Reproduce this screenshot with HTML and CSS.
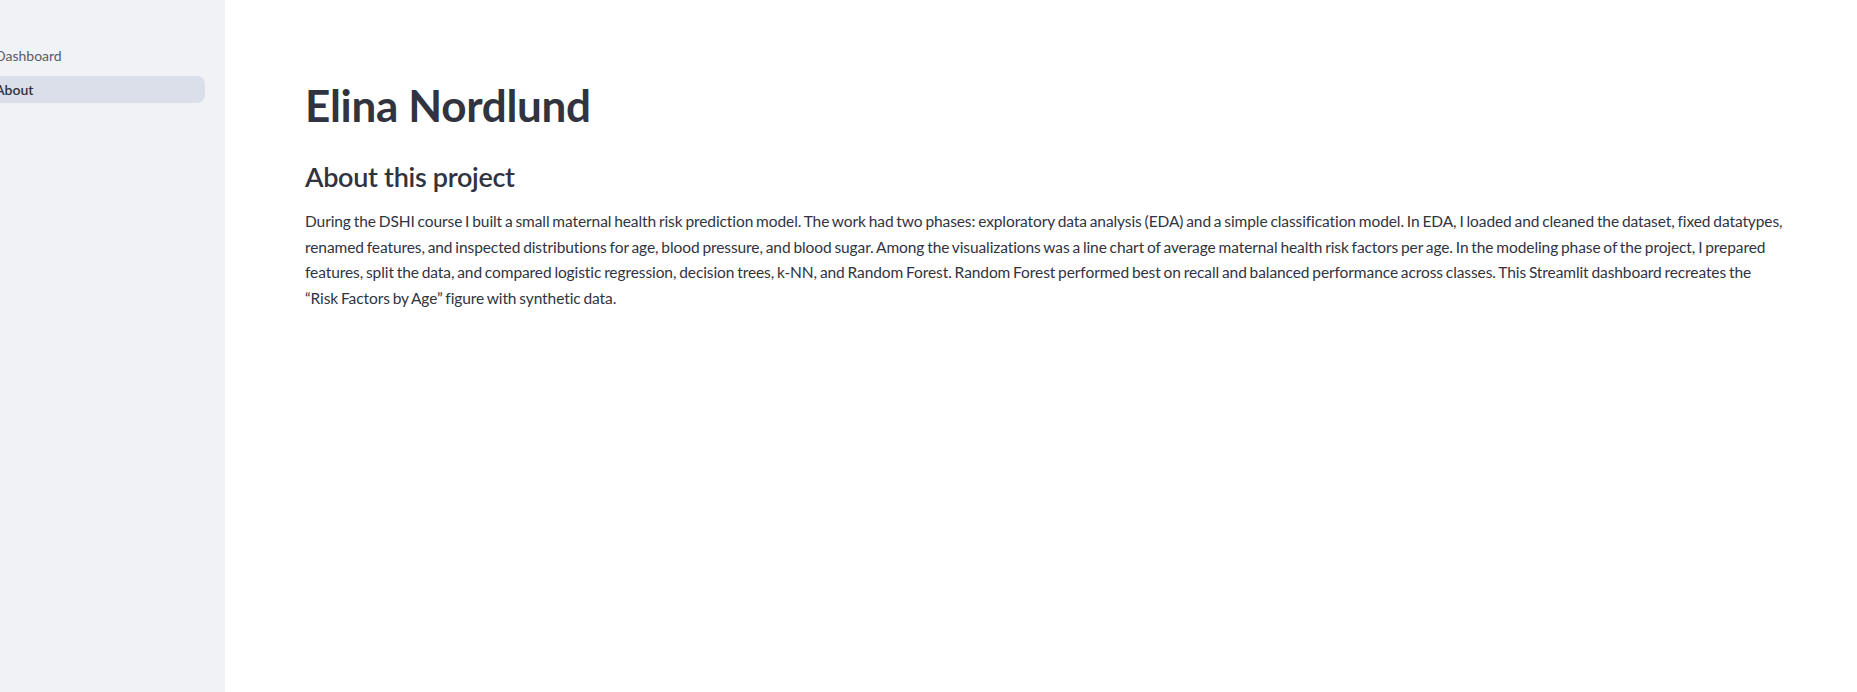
FILE: index.html
```html
<!DOCTYPE html>
<html lang="en">
<head>
<meta charset="utf-8">
<title>About</title>
<link rel="stylesheet" href="styles.css">
</head>
<body>
<div class="app">
  <aside class="sidebar">
    <nav class="nav">
      <a class="nav-item">Dashboard</a>
      <a class="nav-item active">About</a>
    </nav>
  </aside>
  <main class="main">
    <div class="block">
      <h1 class="title">Elina Nordlund</h1>
      <h2 class="subtitle">About this project</h2>
      <p class="body-text">During the DSHI course I built a small maternal health risk prediction model. The work had two phases: exploratory data analysis (EDA) and a simple classification model. In EDA, I loaded and cleaned the dataset, fixed datatypes, renamed features, and inspected distributions for age, blood pressure, and blood sugar. Among the visualizations was a line chart of average maternal health risk factors per age. In the modeling phase of the project, I prepared features, split the data, and compared logistic regression, decision trees, k-NN, and Random Forest. Random Forest performed best on recall and balanced performance across classes. This Streamlit dashboard recreates the “Risk Factors by Age” figure with synthetic data.</p>
    </div>
  </main>
</div>
</body>
</html>
```
FILE: styles.css
```css
html, body {
  margin: 0;
  padding: 0;
  background: #ffffff;
}
body {
  font-family: Lato, "Noto Sans", sans-serif;
  color: #31333f;
}
.app {
  display: flex;
  width: 1857px;
  height: 692px;
  overflow: hidden;
}
.sidebar {
  flex: 0 0 225px;
  background: #f0f2f6;
  overflow: hidden;
}
.nav {
  display: flex;
  flex-direction: column;
  gap: 7px;
  padding-top: 42px;
  margin-left: -24px;
  width: 229px;
}
.nav-item {
  display: block;
  height: 27px;
  line-height: 27px;
  padding-left: 19px;
  border-radius: 8px;
  font-size: 14px;
  color: #585c6a;
}
.nav-item.active {
  background: #dadfe9;
  color: #31333f;
  font-weight: 600;
}
.main {
  flex: 1;
  padding: 0 72px 0 80px;
}
.block {
  padding-top: 79px;
}
.title {
  margin: 0;
  font-size: 44px;
  font-weight: 700;
  line-height: 52px;
  letter-spacing: -0.3px;
}
.subtitle {
  margin: 0;
  padding-top: 28px;
  font-size: 27px;
  font-weight: 600;
  line-height: 36px;
  letter-spacing: -0.3px;
}
.body-text {
  margin: 14px 0 0;
  font-size: 15.5px;
  line-height: 25.6px;
  letter-spacing: -0.09px;
  word-spacing: -1px;
}
```
